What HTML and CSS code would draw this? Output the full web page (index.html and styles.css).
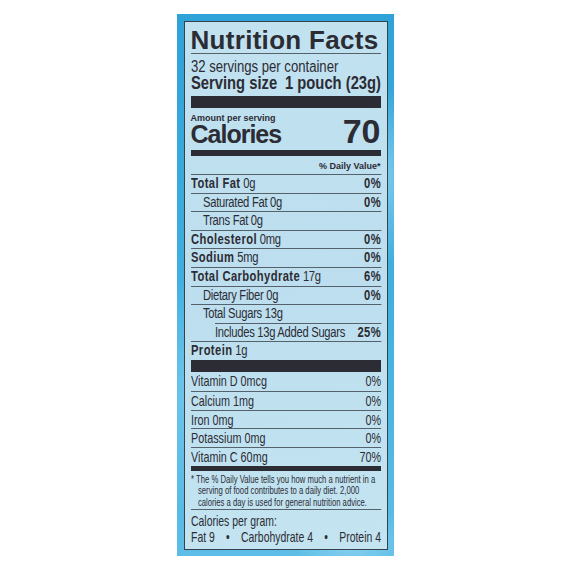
FILE: index.html
```html
<!DOCTYPE html>
<html lang="en">

<head>
    <meta charset="UTF-8">
    <meta name="viewport" content="width=device-width, initial-scale=1.0">
    <title>Nutrition Facts</title>
    <link rel="stylesheet" href="styles.css">
</head>

<body>
    <div class="package">
        <div class="label">
            <h1 class="title">Nutrition Facts</h1>

            <div class="serving-info">
                <p class="servings">32 servings per container</p>
                <p class="serving-size"><span>Serving size</span><span>1 pouch (23g)</span></p>
            </div>

            <div class="bar bar-thick"></div>

            <div class="calories">
                <div>
                    <p class="amount">Amount per serving</p>
                    <p class="calories-label">Calories</p>
                </div>
                <span class="calories-value">70</span>
            </div>

            <div class="bar bar-medium"></div>

            <p class="dv-head">% Daily Value*</p>

            <ul class="nutrients">
                <li class="row"><span><b>Total Fat</b> 0g</span><b>0%</b></li>
                <li class="row sub"><span>Saturated Fat 0g</span><b>0%</b></li>
                <li class="row sub"><span>Trans Fat 0g</span></li>
                <li class="row"><span><b>Cholesterol</b> 0mg</span><b>0%</b></li>
                <li class="row"><span><b>Sodium</b> 5mg</span><b>0%</b></li>
                <li class="row"><span><b>Total Carbohydrate</b> 17g</span><b>6%</b></li>
                <li class="row sub"><span>Dietary Fiber 0g</span><b>0%</b></li>
                <li class="row sub"><span>Total Sugars 13g</span></li>
                <li class="row added"><span>Includes 13g Added Sugars</span><b>25%</b></li>
                <li class="row"><span><b>Protein</b> 1g</span></li>
            </ul>

            <div class="bar bar-thick"></div>

            <ul class="vitamins">
                <li class="row"><span>Vitamin D 0mcg</span><span>0%</span></li>
                <li class="row"><span>Calcium 1mg</span><span>0%</span></li>
                <li class="row"><span>Iron 0mg</span><span>0%</span></li>
                <li class="row"><span>Potassium 0mg</span><span>0%</span></li>
                <li class="row"><span>Vitamin C 60mg</span><span>70%</span></li>
            </ul>

            <div class="bar bar-medium"></div>

            <p class="footnote">* The % Daily Value tells you how much a nutrient in a<br>serving of food contributes to a daily diet. 2,000<br>calories a day is used for general nutrition advice.</p>

            <div class="per-gram">
                <p>Calories per gram:</p>
                <p class="per-gram-values">
                    <span>Fat 9</span><span>&bull;</span><span>Carbohydrate 4</span><span>&bull;</span><span>Protein 4</span>
                </p>
            </div>
        </div>
    </div>
</body>

</html>
```

FILE: styles.css
```css
body {
    margin: 0;
    height: 100vh;
    display: flex;
    justify-content: center;
    align-items: center;
    background-color: #fff;
    font-family: "Liberation Sans", Arial, sans-serif;
    color: #2c2c34;
}

p,
h1,
ul {
    margin: 0;
    padding: 0;
}

ul {
    list-style: none;
}

.package {
    padding: 7px 6px 6px 7px;
    background-color: #3eaddd;
    background-image:
        radial-gradient(ellipse 40px 90px at 95% 30%, rgba(170, 225, 248, 0.6), transparent),
        radial-gradient(ellipse 30px 120px at 4% 70%, rgba(150, 215, 245, 0.5), transparent),
        radial-gradient(ellipse 60px 40px at 80% 98%, rgba(160, 220, 245, 0.6), transparent),
        linear-gradient(180deg, #2fa2d8 0%, #45b2e0 60%, #5dbde6 100%);
}

.label {
    box-sizing: border-box;
    width: 204px;
    padding: 6px 6px 4px;
    border: 1px solid #34424c;
    background-color: #bfe0ef;
    background-image: linear-gradient(170deg, #c2e2f0 0%, #bcdeee 50%, #c4e4f1 100%);
    white-space: nowrap;
}

/* the label type is a condensed face, so the blocks below are squeezed sideways */
.serving-info,
.nutrients,
.vitamins,
.footnote,
.per-gram {
    transform-origin: 0 0;
}

.title {
    font-size: 26px;
    font-weight: bold;
    line-height: 25px;
    letter-spacing: 0.3px;
    border-bottom: 1px solid #55626c;
}

.serving-info {
    width: 231.7px;
    margin-top: 4px;
    transform: scaleX(0.82);
}

.servings {
    font-size: 16px;
    line-height: 17px;
}

.serving-size {
    display: flex;
    justify-content: space-between;
    font-size: 18px;
    font-weight: bold;
    line-height: 17px;
}

.bar {
    background-color: #2c2c34;
}

.bar-thick {
    margin-top: 4px;
    height: 12px;
}

.nutrients + .bar-thick {
    margin-top: 0;
    height: 12.5px;
}

.bar-medium {
    margin-top: 4px;
    height: 6px;
}

.vitamins + .bar-medium {
    margin-top: 0;
    height: 5px;
}

.calories {
    display: flex;
    justify-content: space-between;
    align-items: flex-end;
    margin-top: 5px;
}

.amount {
    font-size: 9px;
    font-weight: bold;
    line-height: 10px;
}

.calories-label {
    font-size: 25px;
    font-weight: bold;
    line-height: 23px;
    letter-spacing: -1px;
}

.calories-value {
    font-size: 34px;
    font-weight: bold;
    line-height: 29px;
}

.dv-head {
    margin-top: 4px;
    padding-bottom: 2px;
    font-size: 9px;
    font-weight: bold;
    line-height: 12px;
    text-align: right;
}

.row {
    display: flex;
    justify-content: space-between;
}

.nutrients {
    width: 237.5px;
    transform: scaleX(0.8);
}

.nutrients .row {
    height: 17.6px;
    border-top: 1px solid #55626c;
    font-size: 14px;
    line-height: 17.6px;
    letter-spacing: -0.35px;
}

.nutrients b {
    letter-spacing: 0.5px;
}

.nutrients .sub {
    padding-left: 15px;
}

.nutrients .added {
    margin-left: 30px;
}

.vitamins {
    width: 263.9px;
    transform: scaleX(0.72);
}

.vitamins .row {
    height: 17.7px;
    border-top: 1px solid #55626c;
    font-size: 15px;
    line-height: 18.7px;
}

.vitamins .row:first-child {
    height: 18.7px;
    border-top: none;
}

.footnote {
    width: 246.75px;
    margin-top: 3px;
    padding: 0 0 1px 9px;
    box-sizing: border-box;
    text-indent: -9px;
    font-size: 10px;
    line-height: 11.4px;
    border-bottom: 1px solid #55626c;
    transform: scaleX(0.77);
}

.per-gram {
    width: 263.9px;
    margin-top: 4px;
    font-size: 14.5px;
    line-height: 15.5px;
    transform: scaleX(0.72);
}

.per-gram-values {
    display: flex;
    justify-content: space-between;
}
```
